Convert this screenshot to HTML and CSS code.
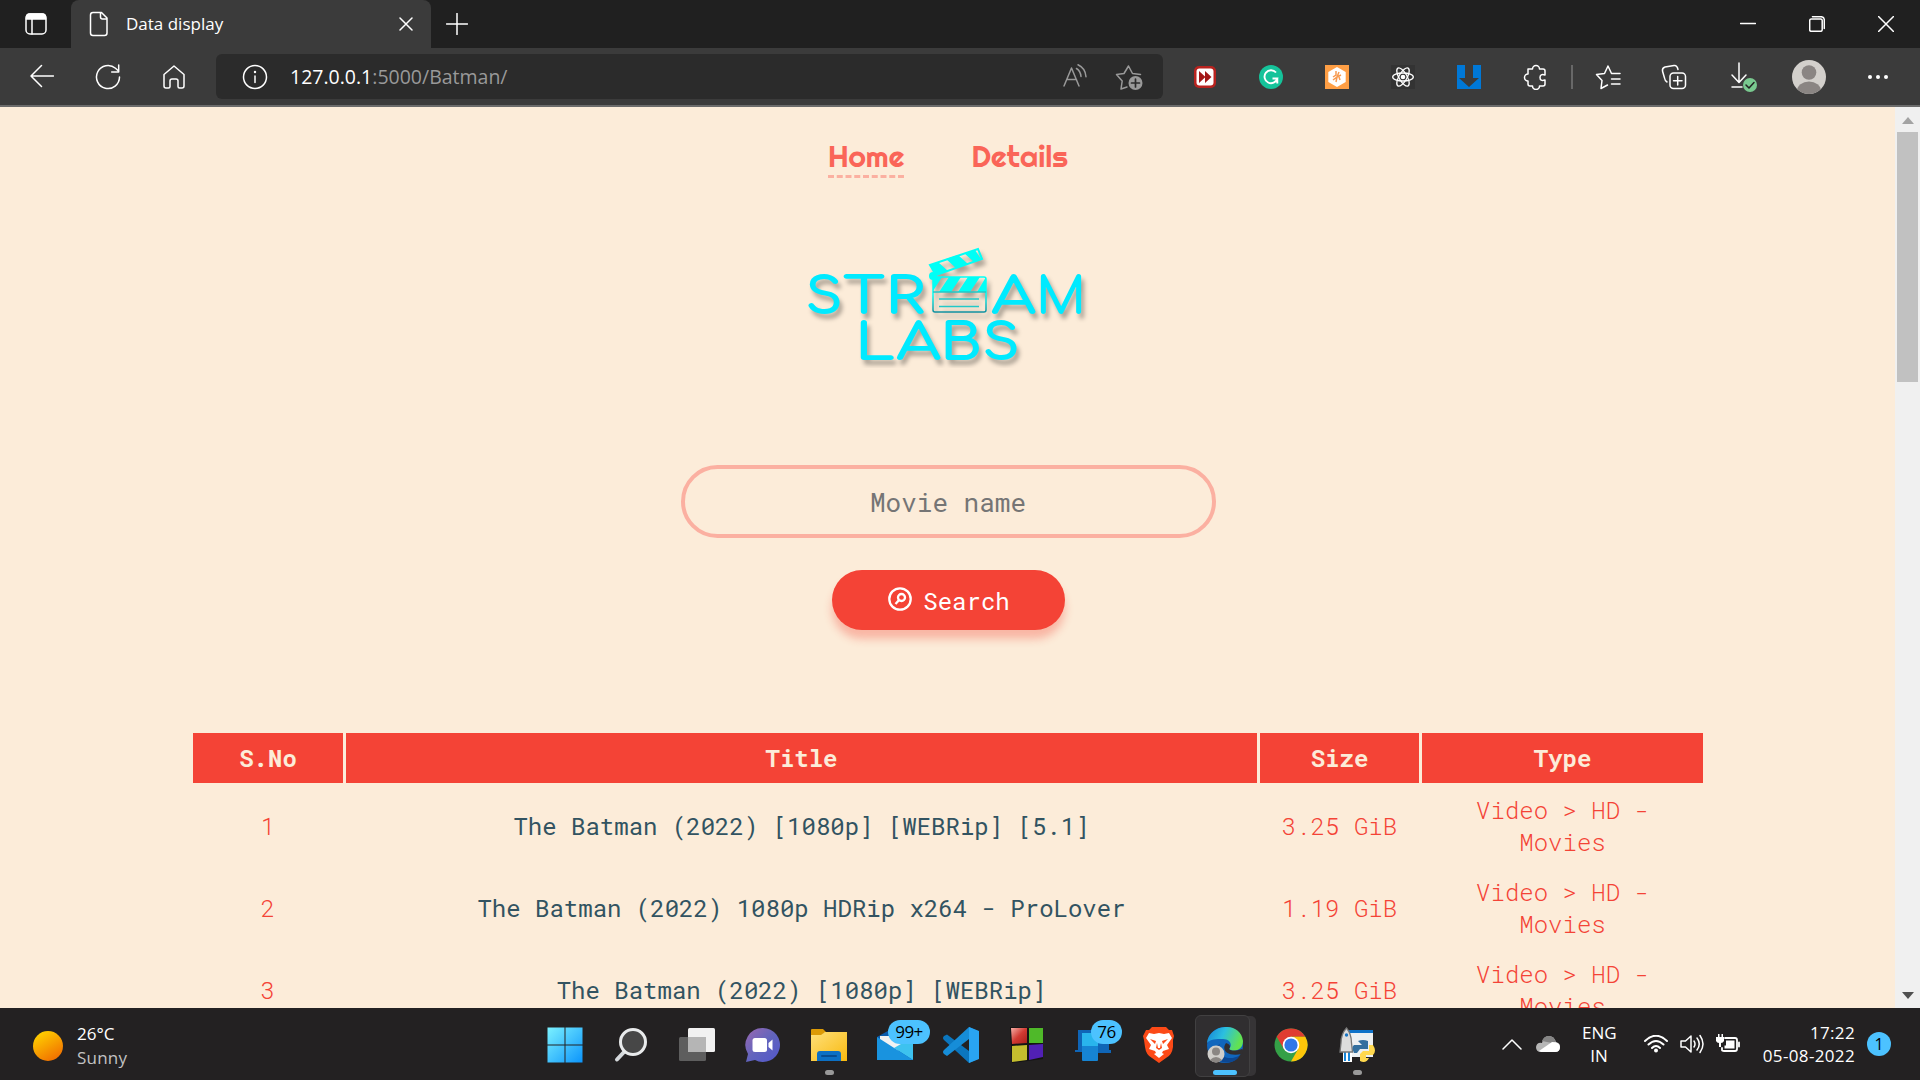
FILE: index.html
```
<!DOCTYPE html>
<html lang="en">
<head>
<meta charset="utf-8">
<title>Data display</title>
<link rel="stylesheet" href="styles.css">
</head>
<body>
<header class="tabbar">
  <div class="workspaces"><svg class="ic" width="24" height="24" viewBox="0 0 24 24"><rect x="2" y="2" width="20" height="20" rx="4"/><path d="M2.500 7V5q0-3 3-3h13q3 0 3 3v2z" fill="#fff"/><path d="M8 7v15"/></svg></div>
  <div class="tab">
    <svg class="ic" width="20" height="26" viewBox="0 0 20 26"><path d="M4 1.500h8.500L18 7v15q0 2.500-2.500 2.500H4Q1.500 24.500 1.500 22V4Q1.500 1.500 4 1.500zM11.500 1.500V6q0 2 2 2H18"/></svg>
    <span class="tab-title">Data display</span>
    <svg class="ic tab-close" width="14" height="14" viewBox="0 0 14 14"><path d="M1 1l12 12M13 1L1 13"/></svg>
  </div>
  <svg class="ic new-tab" width="22" height="22" viewBox="0 0 22 22"><path d="M11 0.500v21M.5 11h21"/></svg>
  <div class="win-controls">
    <span><svg class="ic" width="16" height="16" viewBox="0 0 16 16"><path d="M.5 7.500h15"/></svg></span>
    <span><svg class="ic" width="16" height="16" viewBox="0 0 16 16"><rect x=".7" y="3" width="12.500" height="12.300" rx="1.500"/><path d="M3.500 .7H12q3.300 0 3.300 3.300v8.500"/></svg></span>
    <span><svg class="ic" width="16" height="16" viewBox="0 0 16 16"><path d="M.5.500l15 15M15.500.500l-15 15"/></svg></span>
  </div>
</header>

<div class="toolbar">
  <div class="nav-buttons">
    <span><svg class="ic" width="24" height="24" viewBox="0 0 24 24"><path d="M23.500 12H1M11.500 1.500L1 12l10.500 10.500"/></svg></span>
    <span><svg class="ic" width="26" height="26" viewBox="0 0 26 26"><path d="M24.500 13A11.500 11.500 0 1 1 20.500 4.300L23.500 7M23.700 1v7h-7"/></svg></span>
    <span><svg class="ic" width="24" height="26" viewBox="0 0 24 26"><path d="M2 10.500L12 2l10 8.500V22q0 2-2 2h-2.500q-1.500 0-1.500-1.500V17q0-2-2-2h-4q-2 0-2 2v5.500Q8 24 6.500 24H4q-2 0-2-2z"/></svg></span>
  </div>
  <div class="address">
    <svg class="ic" width="26" height="26" viewBox="0 0 26 26"><circle cx="13" cy="13" r="11.500"/><path d="M13 12v6.500"/><circle cx="13" cy="8" r="1.200" fill="#fff" stroke="none"/></svg>
    <span class="url"><b>127.0.0.1</b>:5000/Batman/</span>
    <svg class="ic dim read" width="26" height="26" viewBox="0 0 26 26"><path d="M2 22L9.500 4 17 22M5 15.500h9.500M14.500 4.500q4 2.500 4.500 8M16 .8q7.500 3.500 8 12"/></svg>
    <svg class="ic dim" width="28" height="28" viewBox="0 0 28 28"><path d="M12 24l-6 2 1.200-8L1.500 11.500l7.500-1L13.500 3l4 7.500 8 1"/><circle cx="20.500" cy="20" r="7" fill="#999" stroke="none"/><path d="M20.500 16v8M16.500 20h8" stroke="#2b2b2b" stroke-width="1.700"/></svg>
  </div>
  <div class="actions">
    <span><svg width="24" height="24" viewBox="0 0 24 24"><rect x="1" y="1" width="22" height="22" rx="5" fill="#b8231f"/><rect x="3.500" y="3.500" width="17" height="17" rx="3" fill="#fff"/><path d="M6 6l6.500 6L6 18zM12 6l6.500 6-6.500 6z" fill="#a31818"/></svg></span>
    <span><svg width="24" height="24" viewBox="0 0 24 24"><circle cx="12" cy="12" r="12" fill="#15c39a"/><path d="M17 7.500a6.500 6.500 0 1 0 1.300 6H13.500M18.300 13.500v5" fill="none" stroke="#fff" stroke-width="1.900"/></svg></span>
    <span><svg width="24" height="24" viewBox="0 0 24 24"><rect width="24" height="24" fill="#ff9f45"/><path d="M12 2l8.700 5v10L12 22l-8.700-5V7z" fill="#fff"/><path d="M11 6v4l-3 2M14 7l-2 5 4-2M8 15l4-3-1 5M14 12l1 3" fill="none" stroke="#f79a50" stroke-width="1.500"/></svg></span>
    <span><svg width="24" height="24" viewBox="0 0 24 24"><rect width="24" height="24" fill="#333"/><g fill="none" stroke="#fff" stroke-width="1.300"><ellipse cx="12" cy="12" rx="10.300" ry="4"/><ellipse cx="12" cy="12" rx="10.300" ry="4" transform="rotate(60 12 12)"/><ellipse cx="12" cy="12" rx="10.300" ry="4" transform="rotate(120 12 12)"/></g><circle cx="12" cy="12" r="2.300" fill="#fff"/></svg></span>
    <span><svg width="24" height="24" viewBox="0 0 24 24"><rect width="24" height="24" fill="#0078d7"/><path d="M8 0h8v13h6L12 22 2 13h6z" fill="#3b3b3b"/></svg></span>
    <span class="puzzle"><svg class="ic" width="26" height="26" viewBox="0 0 26 26"><path d="M5 5h4.500a3.500 3.500 0 0 1 7 0H20q2 0 2 2v4q-5-1.500-5 2.500T22 16v4q0 2-2 2h-3.500a3.500 3.500 0 0 1-7 0H7q-2 0-2-2v-3a3.500 3.500 0 0 1 0-7z"/></svg></span>
    <i class="separator"></i>
    <span><svg class="ic" width="26" height="26" viewBox="0 0 26 26"><path d="M16.500 9.500L13 2 9.500 9.500l-8 1 5.500 6L6 24.500l6.500-3.500M16.500 9.500h8.500M16.500 15H25M16.500 20H25"/></svg></span>
    <span><svg class="ic" width="26" height="26" viewBox="0 0 26 26"><rect x="9" y="9" width="15.500" height="15.500" rx="3.500"/><path d="M16.700 12.500v8.500M12.500 16.700h8.500M6 18Q4 17 3.500 14L1.500 7q-.5-3 2.500-4l9-1.500q3-.5 4 4"/></svg></span>
    <span class="download"><svg class="ic" width="28" height="30" viewBox="0 0 28 30"><path d="M9 1v19M2 13l7 7.500 7-7.500M2 25h10"/><circle cx="20" cy="23" r="7" fill="#79c98f" stroke="none"/><path d="M16 23l3 3 5-5.500" stroke="#222"/></svg></span>
    <span class="profile"><svg width="34" height="34" viewBox="0 0 34 34"><clipPath id="pc"><circle cx="17" cy="17" r="17"/></clipPath><g clip-path="url(#pc)"><rect width="34" height="34" fill="#d3d0cc"/><circle cx="17" cy="12.500" r="7.300" fill="#8a8583"/><ellipse cx="17" cy="31" rx="12" ry="9.500" fill="#8a8583"/></g></svg></span>
    <span><svg width="22" height="6" viewBox="0 0 22 6" fill="#fff"><circle cx="3" cy="3" r="2"/><circle cx="11" cy="3" r="2"/><circle cx="19" cy="3" r="2"/></svg></span>
  </div>
</div>

<div class="viewport">
  <main class="page">
    <nav class="menu"><a class="active">Home</a><a class="details">Details</a></nav>
    <svg class="logo" width="292" height="130" viewBox="0 0 292 130">
      <defs><linearGradient id="clap" x2="0" y2="1"><stop offset=".5" stop-color="#00fff6"/><stop offset="1" stop-color="#108f9f"/></linearGradient></defs>
      <g class="wordmark">
        <text x="4" y="75" textLength="36" lengthAdjust="spacingAndGlyphs">S</text>
        <text x="42" y="75" textLength="40" lengthAdjust="spacingAndGlyphs">T</text>
        <text x="84" y="75" textLength="38" lengthAdjust="spacingAndGlyphs">R</text>
        <text x="190" y="75" textLength="43" lengthAdjust="spacingAndGlyphs">A</text>
        <text x="235" y="75" textLength="48" lengthAdjust="spacingAndGlyphs">M</text>
        <text x="54" y="121" textLength="38" lengthAdjust="spacingAndGlyphs">L</text>
        <text x="95" y="121" textLength="43" lengthAdjust="spacingAndGlyphs">A</text>
        <text x="139" y="121" textLength="40" lengthAdjust="spacingAndGlyphs">B</text>
        <text x="181" y="121" textLength="36" lengthAdjust="spacingAndGlyphs">S</text>
      </g>
      <g class="clapper">
        <path d="M128 27l48-16 4 10-46 16z" fill="none" stroke="#00fff6" stroke-width="2"/>
        <path d="M128 27l8-3 10 9-12 4zM144 21l12-4 10 9-12 4zM162 15l11-3 6 9-7 3z" fill="#00fff6"/>
        <circle cx="131" cy="38" r="4" fill="#00fff6"/>
        <rect x="131" y="39" width="53" height="35" rx="2" fill="none" stroke="url(#clap)" stroke-width="1.500"/>
        <path d="M131 39h9l-9 14zM147 39h12l-10 15h-12zM166 39h12l-10 15h-12zM184 39v15h-9z" fill="#00fff6"/>
        <path d="M131 54h53M137 61h40M137 68.500h40" stroke="#22c8c8" stroke-width="1.600"/>
      </g>
    </svg>
    <form class="search">
      <input type="text" placeholder="Movie name">
      <button type="button"><svg width="24" height="24" viewBox="0 0 24 24" fill="none" stroke="#fff" stroke-width="2.300"><circle cx="12" cy="12" r="10.700"/><circle cx="13.500" cy="10.500" r="3.500"/><path d="M10.800 13.200L7.500 17"/></svg><span>Search</span></button>
    </form>
    <table class="results">
      <colgroup><col class="c-no"><col class="c-title"><col class="c-size"><col class="c-type"></colgroup>
      <thead><tr><th>S.No</th><th>Title</th><th>Size</th><th>Type</th></tr></thead>
      <tbody>
        <tr><td>1</td><td class="title">The Batman (2022) [1080p] [WEBRip] [5.1]</td><td>3.25 GiB</td><td>Video &gt; HD - Movies</td></tr>
        <tr><td>2</td><td class="title">The Batman (2022) 1080p HDRip x264 - ProLover</td><td>1.19 GiB</td><td>Video &gt; HD - Movies</td></tr>
        <tr><td>3</td><td class="title">The Batman (2022) [1080p] [WEBRip]</td><td>3.25 GiB</td><td>Video &gt; HD - Movies</td></tr>
      </tbody>
    </table>
  </main>
  <div class="scrollbar">
    <svg width="12" height="7" viewBox="0 0 12 7"><path d="M0 7L6 0l6 7z" fill="#a3a3a3"/></svg>
    <div class="thumb"></div>
    <svg width="12" height="7" viewBox="0 0 12 7"><path d="M0 0l6 7 6-7z" fill="#505050"/></svg>
  </div>
</div>

<footer class="taskbar">
  <div class="weather">
    <svg width="30" height="30" viewBox="0 0 30 30"><defs><linearGradient id="sun" x1=".2" x2=".8" y2="1"><stop stop-color="#ffd400"/><stop offset="1" stop-color="#f06a00"/></linearGradient></defs><circle cx="15" cy="15" r="15" fill="url(#sun)"/></svg>
    <div><div>26°C</div><div class="muted">Sunny</div></div>
  </div>
  <div class="apps">
    <span><svg width="36" height="36" viewBox="0 0 36 36"><defs><linearGradient id="win" gradientUnits="userSpaceOnUse" x1="0" y1="0" x2="36" y2="36"><stop stop-color="#7df3ff"/><stop offset="1" stop-color="#0a93fb"/></linearGradient></defs><path d="M.5.500h17v17H.500zM18.500.500h17v17h-17zM.5 18.500h17v17H.500zM18.500 18.500h17v17h-17z" fill="url(#win)"/></svg></span>
    <span><svg width="36" height="36" viewBox="0 0 36 36"><path d="M11.500 24.500L4 32.500" stroke="#d5d9dc" stroke-width="4" stroke-linecap="round"/><circle cx="20" cy="15" r="12.500" fill="#474747" stroke="#e9ebec" stroke-width="3"/></svg></span>
    <span><svg width="36" height="36" viewBox="0 0 36 36"><rect x="9" y="1" width="27" height="24" rx="1.500" fill="#f1f1f1"/><rect y="10" width="27" height="24" rx="1.500" fill="#5e5e5e"/><path d="M9 10h18v15H9z" fill="#b5b5b5"/></svg></span>
    <span><svg width="36" height="36" viewBox="0 0 36 36"><defs><linearGradient id="chat" x2="1" y2="1"><stop stop-color="#9a68b0"/><stop offset=".5" stop-color="#6264bd"/><stop offset="1" stop-color="#5156cc"/></linearGradient></defs><path d="M18 1a17 17 0 1 1-8 32L1 35l2-8A17 17 0 0 1 18 1z" fill="url(#chat)"/><rect x="7.500" y="11" width="14.500" height="14" rx="2.500" fill="#fff"/><path d="M23.500 16l4-3.500v11l-4-3.500z" fill="#fff"/></svg></span>
    <span><svg width="36" height="36" viewBox="0 0 36 36"><defs><linearGradient id="fold" x2="1" y2="1"><stop stop-color="#ffe07a"/><stop offset="1" stop-color="#f8b90f"/></linearGradient></defs><path d="M0 3q0-1 1-1h11l4 4h-3l-3 4H0z" fill="#dc9a06"/><path d="M0 8h10l4-3h22v29H0z" fill="url(#fold)"/><path d="M6 34V27q0-3 3-3h18q3 0 3 3v7z" fill="#0c70c4"/><path d="M11 29h14" stroke="#074d91" stroke-width="2" stroke-linecap="round"/></svg><i class="dot"></i></span>
    <span><svg width="36" height="36" viewBox="0 0 36 36"><path d="M0 10L18 0l18 10v23H0z" fill="#0b5bab"/><path d="M3 9h30v9L18 25 3 14z" fill="#f2f2f2"/><path d="M36 10L17 21l19 12z" fill="#3dc2ef"/><path d="M0 10l36 23H0z" fill="#1993df"/></svg><em class="badge wide">99+</em></span>
    <span><svg width="36" height="36" viewBox="0 0 36 36"><path d="M26 0l9 4v28l-9 4L1 13q-2-2 0-4l3-1.500L26 24z" fill="#0b76be"/><path d="M26 0L1 23q-2 2 0 4l3 2L26 12z" fill="#168dd8"/><path d="M26 0l10 4v28l-10 4z" fill="#29a4f2"/></svg></span>
    <span><svg width="36" height="36" viewBox="0 0 36 36"><defs><linearGradient id="red" x2="1" y2="1"><stop stop-color="#f6b0a8"/><stop offset=".5" stop-color="#d23a32"/><stop offset="1" stop-color="#a81f1a"/></linearGradient></defs><path d="M1 0l33 1v31L3 36z" fill="#141414"/><path d="M2 1h16v15L3 17z" fill="url(#red)"/><path d="M20 1h14v15H20z" fill="#4fb929"/><path d="M3 19l15-1v15L3 35z" fill="#c4bd2e"/><path d="M20 18l14-1v13l-14 3z" fill="#5120b5"/></svg></span>
    <span><svg width="36" height="36" viewBox="0 0 36 36"><path d="M3 3h14v22H0v-2h3zM22 14h12v9h2v3H18z" fill="#0f65b7"/><rect x="7" y="6" width="16" height="28" rx="1" fill="#1684d3"/><path d="M7 6h16v13H7z" fill="#29b5ed"/></svg><em class="badge">76</em></span>
    <span><svg width="36" height="36" viewBox="0 0 36 36"><path d="M11 0h14l3 3 3 0 2 6-1 4 0 7q-1 8-7 11l-7 5-7-5q-6-3-7-11l-1-7-1-4 3-6 3 0z" fill="#fc4a17"/><path d="M8 6l5 1 5-1 5 1 5-1 3 5-5 7 2 4-6 2-1 2 2 1-5 4-5-4 2-1-1-2-6-2 2-4-5-7z" fill="#fff"/><path d="M9 12l6 2-1 3zM27 12l-6 2 1 3zM16 16l-1 5 3 2 3-2-1-5-1 5h-2z" fill="#fc4a17"/></svg></span>
    <span class="edge"><svg width="36" height="36" viewBox="0 0 36 36"><defs><linearGradient id="eg" x2="1" y2=".3"><stop stop-color="#1681d7"/><stop offset=".5" stop-color="#2bbfe0"/><stop offset="1" stop-color="#62e251"/></linearGradient></defs><circle cx="18" cy="18" r="18" fill="#1066bd"/><path d="M0 16C2-4 34-6 36 14c0 9-9 12-14 8 4-4 1-10-6-10S3 12 0 16z" fill="url(#eg)"/><path d="M13 17c-5 10 8 19 20 11-4 8-13 9-20 6-8-5-7-14 0-17z" fill="#0c4792"/><path d="M19 16c-5 7 1 14 16 11l2-3-2-2c-6 2-11 2-13 0 2-2 1-5-3-6z" fill="#302e30"/><circle cx="9" cy="27" r="8.500" fill="#d0ceca"/><circle cx="9" cy="24.500" r="4" fill="#8a8683"/><path d="M3 33q6-6 12 0-6 5-12 0z" fill="#8a8683"/></svg><i class="bar"></i></span>
    <span><svg width="36" height="36" viewBox="0 0 36 36"><circle cx="18" cy="18" r="16.500" fill="#34a047"/><path d="M3.700 9.750A16.500 16.500 0 0 1 32.300 9.750H18L10.850 22.100z" fill="#e03c31"/><path d="M32.300 9.750A16.500 16.500 0 0 1 18 34.500l7.150-12.400L18 9.750z" fill="#fdc60a"/><circle cx="18" cy="18" r="8.300" fill="#fff"/><circle cx="18" cy="18" r="6.600" fill="#2f77e8"/></svg></span>
    <span><svg width="36" height="36" viewBox="0 0 36 36"><path d="M8 3h26v27H8z" fill="#edf0f2"/><path d="M8 3h26v3H8z" fill="#0e72c9"/><path d="M4 24h9v11H4z" fill="#fff"/><path d="M6 25v9M10 25v9" stroke="#1887da" stroke-width="2"/><path d="M7.500 1q5 6 5 15l1 9H1l1-9Q2 7 7.500 1z" fill="#ddd" stroke="#777" stroke-width="1.300"/><circle cx="7.500" cy="8" r="1.700" fill="#1976c5"/><path d="M19 14q5-2 10 0v8h-8l-3 4h-3q-3-6 0-8h8z" fill="#336f9f"/><path d="M30 18h4q4 6 0 10h-7v3h3q-3 6-9 3v-7l3-3h6z" fill="#ffd84e"/></svg><i class="dot"></i></span>
  </div>
  <div class="tray">
    <svg class="ic chevron" width="20" height="12" viewBox="0 0 20 12"><path d="M1 11l9-9 9 9"/></svg>
    <svg class="cloud" width="24" height="16" viewBox="0 0 24 16"><path d="M6 7q1-7 7-7 5 0 7 6 4 1 4 5 0 5-5 5H5q-5 0-5-5 1-5 6-4z" fill="#b6b6b6"/><path d="M6 5q2-5 7-5 5 0 7 6l-4 1z" fill="#858585"/><path d="M3 15l13-9q8 0 8 5 0 5-5 5H5z" fill="#fff"/></svg>
    <div class="lang">ENG<br>IN</div>
    <svg class="ic" width="24" height="18" viewBox="0 0 24 18"><path d="M1 6q11-10.500 22 0M4.500 9.500q7.500-7 15 0M8 13q4-4 8 0" stroke-width="2"/><circle cx="12" cy="15.500" r="2" fill="#fff" stroke="none"/></svg>
    <svg class="ic" width="24" height="20" viewBox="0 0 24 20"><path d="M1 7h4.500L11 2v16l-5.500-5H1zM14 7q2 3 0 6M17 4q4.500 6 0 12M20 1.500q6 8.500 0 17"/></svg>
    <svg class="ic" width="24" height="20" viewBox="0 0 24 20"><path d="M9 4h10q2 0 2 2v9q0 2-2 2H8q-2 0-2-1v-2M23 8.500v4" stroke-width="1.800"/><path d="M10 6.500h8.500v8H8.500v-3H10z" fill="#fff" stroke="none"/><path d="M0 3h2V0h1.500v3h2V0H7v3h1v4q-1 2-3 2v4H3V9Q1 9 0 7z" fill="#fff" stroke="none"/></svg>
    <div class="clock">17:22<br>05-08-2022</div>
    <div class="notice">1</div>
  </div>
</footer>
</body>
</html>
```
FILE: styles.css
```
* { box-sizing: border-box; }
body {
  margin: 0; width: 1920px; height: 1080px; overflow: hidden;
  display: flex; flex-direction: column;
  font-family: "Segoe UI", "Open Sans", "Noto Sans", sans-serif;
  font-size: 17px; color: #fff; background: #fcecd9;
}
svg { display: block; flex: none; }
.ic { fill: none; stroke: #fff; stroke-width: 1.5; stroke-linecap: round; stroke-linejoin: round; }
.dim { stroke: #999; }

.tabbar { height: 48px; flex: none; display: flex; align-items: center; background: #202020; }
.workspaces { width: 71px; padding-left: 24px; }
.tab { width: 360px; height: 48px; display: flex; align-items: center; padding: 0 18px; background: #3b3b3b; border-radius: 8px 8px 0 0; }
.tab-title { margin-left: 17px; padding-bottom: 2px; }
.tab-close { margin-left: auto; }
.new-tab { margin-left: 15px; }
.win-controls { margin-left: auto; display: flex; }
.win-controls span { width: 69px; display: flex; justify-content: center; }

.toolbar { height: 59px; flex: none; display: flex; align-items: center; background: #3b3b3b; border-bottom: 2px solid #6b6b6b; padding-right: 9px; }
.nav-buttons { width: 216px; display: flex; padding-left: 9px; }
.nav-buttons span { width: 66px; display: flex; justify-content: center; }
.address { width: 947px; height: 45px; margin-right: 9px; display: flex; align-items: center; padding: 0 20px 0 26px; background: #2b2b2b; border-radius: 6px; }
.url { margin-left: 22px; font-size: 19.500px; color: #999; }
.url b { font-weight: 400; color: #fff; }
.read { margin-left: auto; margin-right: 27px; }
.actions { display: flex; align-items: center; }
.actions span { width: 66px; display: flex; justify-content: center; }
.actions .puzzle { padding-left: 2px; }
.actions .download { padding-left: 7px; }
.actions .profile { width: 72px; }
.separator { width: 2px; height: 24px; margin: 0 2px 0 3px; background: #686868; }

.viewport { height: 901px; flex: none; display: flex; }
.page { width: 1895px; height: 901px; padding-left: 1px; overflow: hidden; display: flex; flex-direction: column; align-items: center; color: #f44336; font-family: "Roboto Mono", "Liberation Mono", monospace; }
.menu { display: flex; gap: 67px; margin-top: 30px; height: 42px; font-family: Righteous, Lato, sans-serif; font-weight: 400; font-size: 30px; line-height: 38px; color: #fa6558; }
.menu a { height: 41px; border-bottom: 3px dashed transparent; }
.menu .active { border-color: #fbb0a1; }
.logo { margin-top: 60px; }
.wordmark { font-family: Comfortaa, Quicksand, Lato, sans-serif; font-weight: 300; font-size: 48px; fill: #00eaff; stroke: #00eaff; stroke-width: 2px; stroke-linejoin: round; }
.wordmark, .clapper { filter: drop-shadow(3px 5px 2px rgba(0, 0, 0, .3)); }
.search { display: flex; flex-direction: column; align-items: center; margin-top: 97px; }
.search input { width: 535px; height: 73px; border: 4px solid #fbb0a1; border-radius: 37px; background: transparent; text-align: center; font: 26px "Roboto Mono", "Liberation Mono", monospace; outline: none; }
.search input::placeholder { color: #757575; }
.search button { width: 233px; height: 60px; margin-top: 32px; display: flex; align-items: center; justify-content: center; gap: 11px; padding: 0 0 2px 2px; border: 0; border-radius: 30px; background: #f44336; color: #fff; font: 24px "Roboto Mono", "Liberation Mono", monospace; box-shadow: 0 9px 9px rgba(244, 67, 54, .32); }
.search button span { padding-top: 4px; }
.results { width: 1516px; margin-top: 100px; table-layout: fixed; border-spacing: 3px; font-size: 24px; line-height: 32px; text-align: center; flex: none; }
.c-no { width: 150px; } .c-title { width: 911px; } .c-size { width: 159px; } .c-type { width: 281px; }
.results th { height: 50px; padding: 0; background: #f44336; color: #fcecd9; }
.results td { height: 79px; padding: 0 20px; font-weight: 360; }
.results td:nth-child(3) { padding: 0; }
.results .title { color: #325361; font-weight: 370; }

.scrollbar { width: 25px; background: #f0f0f0; display: flex; flex-direction: column; align-items: center; padding: 10px 0 9px; }
.scrollbar .thumb { width: 21px; height: 250px; margin: 8px 0 auto; background: #c1c1c1; }

.taskbar { height: 72px; flex: none; display: grid; grid-template-columns: 532px 858px 530px; background: #232122; line-height: 23px; }
.weather { display: flex; align-items: center; gap: 14px; padding-left: 33px; height: 75px; line-height: 24px; }
.muted { color: #c2c2c2; letter-spacing: 0.2px; }
.apps { display: flex; }
.apps span { width: 66px; height: 72px; position: relative; display: flex; justify-content: center; padding-top: 19px; }
.dot, .bar { position: absolute; bottom: 5px; left: 29px; width: 9px; height: 5px; border-radius: 3px; background: #999; }
.bar { left: 21px; width: 24px; background: #4cc2ff; }
.badge { position: absolute; top: 12px; left: 31px; width: 31px; height: 24px; border-radius: 12px; background: #4cc2ff; color: #000; font-style: normal; font-size: 17px; line-height: 24px; text-align: center; letter-spacing: -0.5px; }
.badge.wide { left: 26px; width: 42px; }
.edge::before { content: ""; position: absolute; left: 3px; top: 7px; width: 53px; height: 60px; border-radius: 6px; background: #302e30; border: 1px solid #414041; box-shadow: 7px 0 0 -1px #363436; }
.edge svg { position: relative; }
.tray { display: flex; align-items: center; height: 72px; padding-left: 112px; }
.cloud { margin: 0 22px 0 14px; }
.lang { width: 34px; margin-right: 28px; text-align: center; }
.tray .ic + .ic { margin-left: 12px; }
.clock { flex: 1; text-align: right; letter-spacing: 0.35px; }
.notice { width: 24px; height: 24px; margin: 0 29px 0 12px; border-radius: 50%; background: #4cc2ff; color: #000; text-align: center; font-size: 16px; line-height: 24px; }
```
